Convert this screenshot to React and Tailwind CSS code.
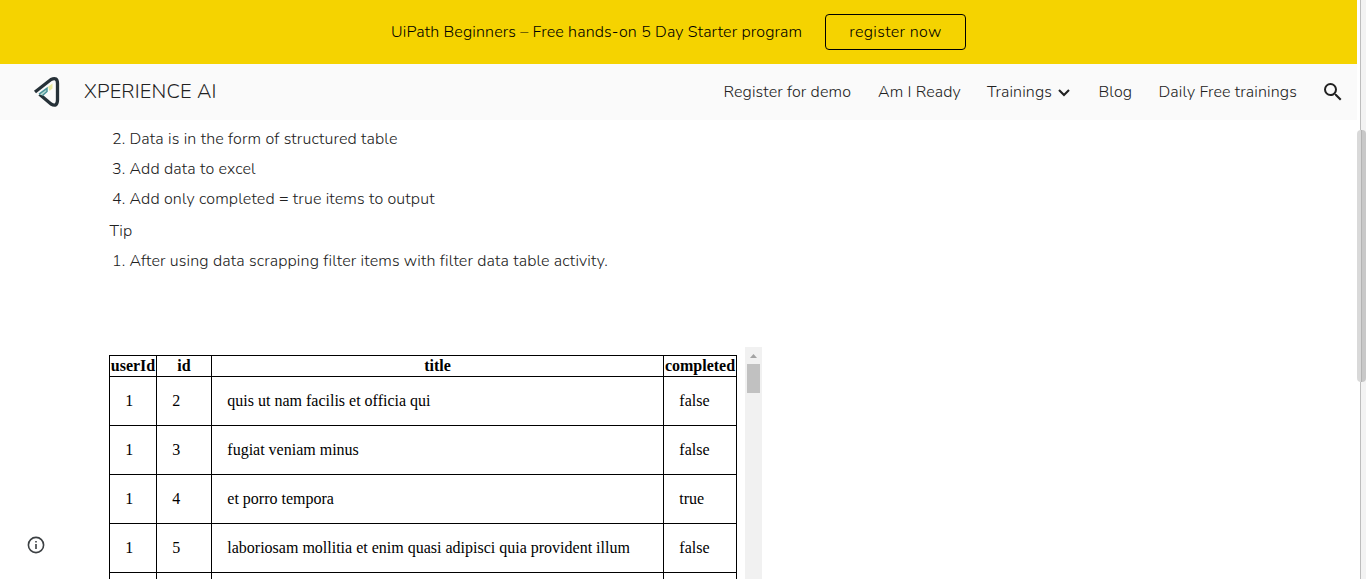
import React from 'react';

const rows = [
  [1, 2, 'quis ut nam facilis et officia qui', 'false'],
  [1, 3, 'fugiat veniam minus', 'false'],
  [1, 4, 'et porro tempora', 'true'],
  [1, 5, 'laboriosam mollitia et enim quasi adipisci quia provident illum', 'false'],
  ['', '', '', ''],
];

function Logo() {
  return (
    <svg className="ml-[33px] h-8 w-7 shrink-0" viewBox="0 0 28 32" fill="none">
      <path d="M2 16 18 3.5Q24.5.5 24.5 7.5V24Q24.3 31.5 18 28L6.5 18.3" stroke="#263138" strokeWidth="3.3" strokeLinejoin="round" />
      <path d="M6 18.2 14 12.3V15.5L9.5 19.5" stroke="#4b9299" strokeWidth="1.5" fill="#b9dcd2" />
      <path d="m15 10.8 4.5-3.3v5L16.5 15z" fill="#e9e9a0" />
    </svg>
  );
}

function Banner() {
  return (
    <div className="flex h-16 shrink-0 items-center bg-[#f5d300] pl-[391px] tracking-[0.14px] text-black">
      <span className="w-[434px] whitespace-nowrap">UiPath Beginners – Free hands-on 5 Day Starter program</span>
      <button className="h-9 w-[141px] whitespace-nowrap rounded border border-black tracking-[0.35px]">register now</button>
    </div>
  );
}

function Header() {
  return (
    <header className="flex h-14 shrink-0 items-center whitespace-nowrap bg-[#fafafa] tracking-[0.12px] text-[#212121]">
      <Logo />
      <span className="ml-[23px] w-[639.5px] text-[20px] tracking-[0.18px]">XPERIENCE AI</span>
      <nav className="flex items-center">
        <a className="w-[154.5px]">Register for demo</a>
        <a className="w-[109px]">Am I Ready</a>
        <a className="w-[66px]">Trainings</a>
        <svg className="mr-[25.5px] mt-0.5 h-5 w-5" viewBox="0 0 20 20" fill="none" stroke="#212121" strokeWidth="2.1">
          <path d="m6 7 5 5 5-5" />
        </svg>
        <a className="w-[60px]">Blog</a>
        <a className="w-[162.5px]">Daily Free trainings</a>
      </nav>
      <svg className="h-6 w-6" viewBox="0 0 24 24" fill="#212121">
        <path d="M15.5 14h-.79l-.28-.27A6.47 6.47 0 0 0 16 9.5 6.5 6.5 0 1 0 9.5 16c1.61 0 3.09-.59 4.23-1.57l.27.28v.79l5 4.99L20.49 19l-4.99-5zm-6 0C7.01 14 5 11.99 5 9.5S7.01 5 9.5 5 14 7.01 14 9.5 11.99 14 9.5 14z" />
      </svg>
    </header>
  );
}

function Item({ n, children }) {
  return (
    <li className="flex h-[30px] items-center pl-[3px]">
      <span className="w-[17.5px]">{n}.</span>
      <span className="whitespace-nowrap">{children}</span>
    </li>
  );
}

function DataTable() {
  return (
    <table className="mt-2 w-[628px] table-fixed border-collapse self-start text-[16px] leading-5">
      <colgroup>
        <col className="w-[47px]" />
        <col className="w-[55px]" />
        <col className="w-[452px]" />
        <col className="w-[73px]" />
      </colgroup>
      <thead>
        <tr className="h-[21px]">
          {['userId', 'id', 'title', 'completed'].map((h) => (
            <th key={h} className="border border-black p-0 font-bold">{h}</th>
          ))}
        </tr>
      </thead>
      <tbody>
        {rows.map((r) => (
          <tr key={r[1]} className="h-[49px]">
            {r.map((c, i) => (
              <td key={i} className="whitespace-nowrap border border-black py-0 pl-[15.3px] pr-0">{c}</td>
            ))}
          </tr>
        ))}
      </tbody>
    </table>
  );
}

export default function App() {
  return (
    <div className="flex h-[579px] w-[1366px] overflow-hidden bg-white font-['Nunito','Open_Sans',sans-serif] text-[16px] font-light">
      <div className="flex w-[1357px] shrink-0 flex-col">
        <Banner />
        <Header />
        <main className="flex h-[459px] text-[#212121]">
          <aside className="flex w-[109px] shrink-0 items-end pb-6 pl-[26px]">
            <svg className="h-5 w-5" viewBox="0 0 20 20" fill="none" stroke="#3c4043" strokeWidth="1.6">
              <circle cx="10" cy="10" r="7.6" />
              <path d="M10 9v5M10 6v1.6" />
            </svg>
          </aside>
          <div className="flex min-w-0 flex-1 flex-col pt-1 tracking-[0.14px]">
            <ol>
              <Item n="2">Data is in the form of structured table</Item>
              <Item n="3">Add data to excel</Item>
              <Item n="4">Add only completed = true items to output</Item>
            </ol>
            <p className="mt-0.5 h-[30px] pl-[0.5px] leading-[30px]">Tip</p>
            <ol>
              <Item n="1">After using data scrapping filter items with filter data table activity.</Item>
            </ol>
            <section className="mt-[71px] flex h-[232px] shrink-0 overflow-hidden font-['Liberation_Serif',serif] font-normal tracking-normal text-black">
              <DataTable />
              <div className="ml-2 flex w-[17px] flex-col items-center bg-[#f1f1f1]">
                <svg className="h-[17px] w-[17px]" viewBox="0 0 17 17" fill="#a3a3a3">
                  <path d="m5 11 3.5-4 3.5 4z" />
                </svg>
                <div className="h-[29px] w-[13px] bg-[#c1c1c1]" />
              </div>
            </section>
          </div>
        </main>
      </div>
      <div className="flex w-[9px] shrink-0 bg-[linear-gradient(to_right,#fff_3px,#bdbdbd_3px,#bdbdbd_4px,#f3f3f3_4px)] pt-[130px]">
        <div className="h-[252px] w-[9px] rounded bg-[linear-gradient(to_right,#d9d9d9_4px,#b3b3b3_4px,#b3b3b3_5px,#c8c8c8_5px)]" />
      </div>
    </div>
  );
}
